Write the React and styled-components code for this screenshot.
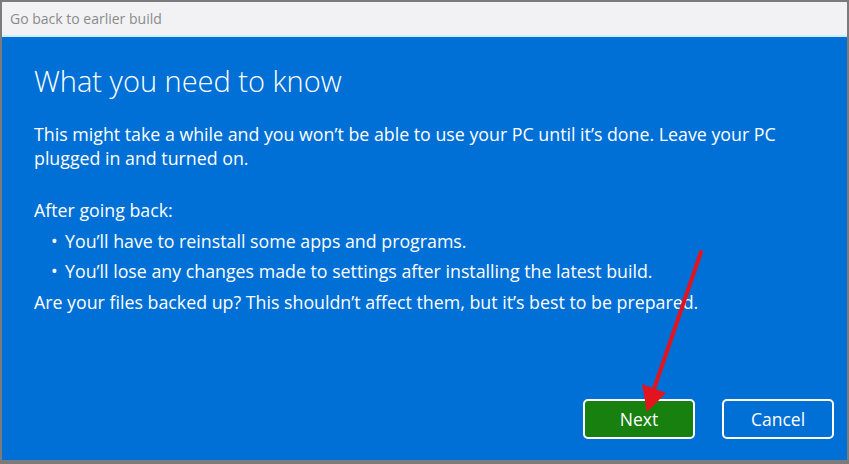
import React from 'react';
import styled, { createGlobalStyle } from 'styled-components';

const GlobalStyle = createGlobalStyle`
  html, body {
    margin: 0;
    padding: 0;
    background: #7b7b7b;
  }
  * {
    box-sizing: border-box;
  }
`;

const Frame = styled.div`
  position: relative;
  width: 849px;
  height: 464px;
  border: 2px solid #7b7b7b;
  border-bottom-width: 4px;
  display: flex;
  flex-direction: column;
  font-family: "Open Sans", "Noto Sans", sans-serif;
  background: #006fd6;
`;

const TitleBar = styled.div`
  height: 35px;
  background: #f2f2f4;
  border-bottom: 2px solid #c9eefa;
  display: flex;
  align-items: center;
  padding-left: 8px;
  color: #8a8a8a;
  font-size: 14px;
`;

const Content = styled.div`
  flex: 1;
  display: flex;
  flex-direction: column;
  padding: 24px 13px 21px 32px;
  color: #ffffff;
`;

const Heading = styled.h1`
  margin: 0;
  font-size: 29px;
  font-weight: 300;
  line-height: 40px;
`;

const Paragraph = styled.p`
  margin: ${({ top }) => top || 0}px 0 0;
  font-size: 17.8px;
  line-height: 24px;
  width: 770px;
`;

const List = styled.ul`
  margin: 7px 0 0;
  padding: 0 0 0 17px;
  list-style: none;
  display: flex;
  flex-direction: column;
  gap: 6px;
`;

const Item = styled.li`
  font-size: 17.8px;
  line-height: 24px;
  display: flex;
  gap: 7px;

  &::before {
    content: "•";
    width: 7px;
  }
`;

const Actions = styled.div`
  margin-top: auto;
  display: flex;
  justify-content: flex-end;
  gap: 27px;
`;

const Button = styled.button`
  width: 112px;
  height: 40px;
  border: 2px solid #ffffff;
  border-radius: 5px;
  background: ${({ primary }) => (primary ? '#17800f' : 'transparent')};
  color: #ffffff;
  font-family: inherit;
  font-size: 17.5px;
`;

const Arrow = styled.svg`
  position: absolute;
  left: 0;
  top: 0;
  pointer-events: none;
`;

export default function App() {
  return (
    <>
      <GlobalStyle />
      <Frame>
        <TitleBar>Go back to earlier build</TitleBar>
        <Content>
          <Heading>What you need to know</Heading>
          <Paragraph top={21}>
            This might take a while and you won’t be able to use your PC until it’s done. Leave your PC
            plugged in and turned on.
          </Paragraph>
          <Paragraph top={28}>After going back:</Paragraph>
          <List>
            <Item>You’ll have to reinstall some apps and programs.</Item>
            <Item>You’ll lose any changes made to settings after installing the latest build.</Item>
          </List>
          <Paragraph top={7}>
            Are your files backed up? This shouldn’t affect them, but it’s best to be prepared.
          </Paragraph>
          <Actions>
            <Button primary>Next</Button>
            <Button>Cancel</Button>
          </Actions>
        </Content>
        <Arrow width="845" height="458" viewBox="-2 -2 845 458">
          <line x1="697" y1="248" x2="650" y2="385" stroke="#e3141e" strokeWidth="4" strokeLinecap="round" />
          <polygon points="638,380 662,389 643,408" fill="#e3141e" />
        </Arrow>
      </Frame>
    </>
  );
}
